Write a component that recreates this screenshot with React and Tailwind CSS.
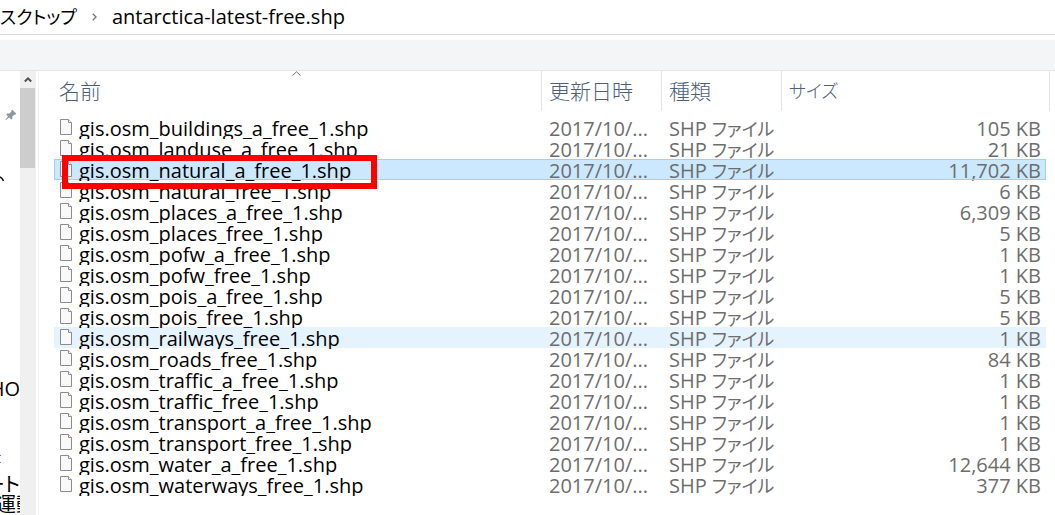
const files = [
  ["gis.osm_buildings_a_free_1.shp", "105 KB"],
  ["gis.osm_landuse_a_free_1.shp", "21 KB"],
  ["gis.osm_natural_a_free_1.shp", "11,702 KB"],
  ["gis.osm_natural_free_1.shp", "6 KB"],
  ["gis.osm_places_a_free_1.shp", "6,309 KB"],
  ["gis.osm_places_free_1.shp", "5 KB"],
  ["gis.osm_pofw_a_free_1.shp", "1 KB"],
  ["gis.osm_pofw_free_1.shp", "1 KB"],
  ["gis.osm_pois_a_free_1.shp", "5 KB"],
  ["gis.osm_pois_free_1.shp", "5 KB"],
  ["gis.osm_railways_free_1.shp", "1 KB"],
  ["gis.osm_roads_free_1.shp", "84 KB"],
  ["gis.osm_traffic_a_free_1.shp", "1 KB"],
  ["gis.osm_traffic_free_1.shp", "1 KB"],
  ["gis.osm_transport_a_free_1.shp", "1 KB"],
  ["gis.osm_transport_free_1.shp", "1 KB"],
  ["gis.osm_water_a_free_1.shp", "12,644 KB"],
  ["gis.osm_waterways_free_1.shp", "377 KB"],
];

const SELECTED = 2;
const HOVERED = 10;

function FileIcon() {
  return (
    <svg className="mt-0.5 block h-4 w-3 shrink-0" viewBox="0 0 12 16" aria-hidden="true">
      <path d="M.5.5h8l3 3v12H.5z" fill="#f9f9f9" stroke="#8c8c8c" />
      <path d="M8.5.5v3h3" fill="#fff" stroke="#8c8c8c" />
    </svg>
  );
}

function PinIcon() {
  return (
    <svg className="block h-3 w-3" viewBox="0 0 12 12" aria-hidden="true">
      <path d="M7.200.8 11.200 4.600 10 6 9 5.700 7.200 7.800l.2 1.800-1.200 1L4.200 8.600.8 11.200.4 10.800 3 7.400 1.200 5.600l1-1.100 2 .1L6.400 2.700 6 1.800z" fill="#8d99a2" />
    </svg>
  );
}

function rowStyle(i) {
  if (i === SELECTED) return "bg-[#cce8ff] outline outline-1 -outline-offset-1 outline-[#99d1ff]";
  if (i === HOVERED) return "bg-[#e5f3ff]";
  return "";
}

function Sidebar() {
  return (
    <aside className="flex w-9 shrink-0">
      <nav className="w-5 overflow-hidden whitespace-nowrap text-xl leading-5 text-black">
        <div className="flex justify-end pt-[38px] pr-[3px]">
          <PinIcon />
        </div>
        <a href="#documents" aria-label="ドキュメント" className="mt-12 flex h-5 items-center">
          <svg className="h-2 w-1" viewBox="0 0 4 8" aria-hidden="true">
            <path d="M0 2Q2 3 3.500 6" fill="none" stroke="#000" strokeWidth="1.500" />
          </svg>
        </a>
        <a href="#folder" className="mt-[190px] flex h-5 justify-end">HO</a>
        <div className="mt-[56px] h-2 w-px border-y border-[#3f8fbf]" />
        <a href="#route" className="mt-3 flex h-5 justify-end [font-feature-settings:'palt']">ート</a>
        <a href="#exercise" className="-ml-1 block h-5">運動</a>
      </nav>
      <div className="w-4 bg-[#f0f0f0]">
        <button type="button" aria-label="上へスクロール" className="flex h-[17px] w-[15px] items-center justify-center">
          <svg className="h-2 w-2" viewBox="0 0 8 8" aria-hidden="true">
            <path d="M.8 5.500 4 2.300 7.200 5.500" fill="none" stroke="#505050" strokeWidth="2" />
          </svg>
        </button>
        <div className="h-20 w-[15px] bg-[#cdcdcd]" />
      </div>
    </aside>
  );
}

const headCell = "border-l border-[#e5e5e5] p-0 pl-[7px] text-left align-middle font-light";

function FileTable() {
  return (
    <table className="w-full table-fixed border-separate border-spacing-0 whitespace-nowrap text-xl leading-[21px]">
      <colgroup>
        <col />
        <col className="w-[120px]" />
        <col className="w-[120px]" />
        <col className="w-[265px]" />
      </colgroup>
      <thead className="text-[21px] text-[#4c607a]">
        <tr className="h-10">
          <th scope="col" className="relative p-0 pl-[5px] text-left align-middle font-light">
            名前
            <svg className="absolute top-0 left-[238px] h-[5px] w-[9px]" viewBox="0 0 9 5" aria-hidden="true">
              <path d="M.5 4.500 4.500.8 8.500 4.500" fill="none" stroke="#6d6d6d" />
            </svg>
          </th>
          <th scope="col" className={headCell}>更新日時</th>
          <th scope="col" className={headCell}>種類</th>
          <th scope="col" className={headCell}>
            <div className="-mr-1 flex h-10 items-center border-r border-[#e5e5e5] text-lg [font-feature-settings:'palt']">サイズ</div>
          </th>
        </tr>
      </thead>
      <tbody className="text-[#6d6d6d] before:block before:h-1.5">
        {files.map(([name, size], i) => (
          <tr key={name} className={rowStyle(i)}>
            <td className="relative p-0 text-black">
              <div className="-mb-px flex h-[22px] items-start gap-[7px] overflow-hidden pl-[6px]">
                <FileIcon />
                <span className="leading-6">{name}</span>
              </div>
              {i === SELECTED && (
                <div className="pointer-events-none absolute -top-1 left-2 z-10 h-[34px] w-[315px] border-6 border-[#ff0000]" />
              )}
            </td>
            <td className="p-0 pl-2"><div className="h-[21px] leading-6">2017/10/...</div></td>
            <td className="p-0 pl-2">
              <div className="h-[21px] leading-6">
                SHP <span className="text-lg leading-none [font-feature-settings:'palt']">ファイル</span>
              </div>
            </td>
            <td className="p-0 pr-[5px] text-right"><div className="h-[21px] leading-6">{size}</div></td>
          </tr>
        ))}
      </tbody>
    </table>
  );
}

export default function App() {
  return (
    <div className="flex h-screen flex-col overflow-hidden bg-white font-['Open_Sans','Noto_Sans_CJK_JP',sans-serif]">
      <header className="flex h-[35px] shrink-0 items-center border-b border-[#d9d9d9] text-xl text-black">
        <span className="text-lg [font-feature-settings:'palt']">スクトップ</span>
        <svg className="mx-[15px] h-2 w-[5px]" viewBox="0 0 5 8" aria-hidden="true">
          <path d="M.8.8 4 4 .8 7.200" fill="none" stroke="#777" strokeWidth="1.300" />
        </svg>
        <span>antarctica-latest-free.shp</span>
      </header>
      <div className="mt-[5px] h-[31px] shrink-0 border-b border-[#e5e5e5] bg-[#f4f5f7]" />
      <div className="flex min-h-0 flex-1">
        <Sidebar />
        <main className="ml-0.5 min-w-0 flex-1 border-l border-[#f0f0f0] pr-[9px] pl-[15px]">
          <FileTable />
        </main>
      </div>
    </div>
  );
}
